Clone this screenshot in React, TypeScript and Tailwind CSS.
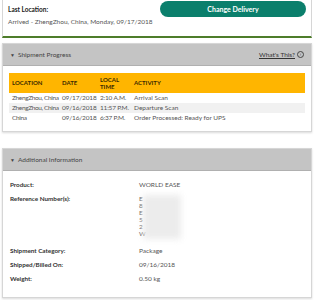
import { Fragment } from 'react';

const rows = [
  { loc: 'ZhengZhou, China', date: '09/17/2018', time: '2:10 A.M.', act: 'Arrival Scan' },
  { loc: 'ZhengZhou, China', date: '09/16/2018', time: '11:57 P.M.', act: 'Departure Scan' },
  { loc: 'China', date: '09/16/2018', time: '6:37 P.M.', act: 'Order Processed: Ready for UPS' },
];

const refs = ['E', '8', 'E', '5', '2', 'W'];

const PanelHeader = ({ title, help }: { title: string; help?: boolean }) => (
  <div className="flex items-center justify-between h-[22px] bg-[#c4c4c4] px-[7px] border-b border-[#b0b0b0]">
    <div className="flex items-center gap-[3px] text-[#444]">
      <span className="text-[5px]">▼</span>
      <span>{title}</span>
    </div>
    {help && (
      <div className="flex items-center gap-[2px] text-[#333]">
        <span className="underline">What's This?</span>
        <span className="inline-flex items-center justify-center w-[7px] h-[7px] rounded-full border border-[#444] text-[5px] leading-none">›</span>
      </div>
    )}
  </div>
);

const App = () => {
  return (
    <div className="w-[314px] h-[300px] bg-white overflow-hidden text-[6.5px] leading-[8px] text-[#555]" style={{ fontFamily: 'Lato, "Open Sans", sans-serif' }}>
      <div className="mx-[2px] border-x border-[#d6d6d6] border-b-2 border-b-[#4e7d2a] h-[38px] flex justify-between px-[5px]">
        <div className="pt-[6px]">
          <div className="font-bold text-[#222]">Last Location:</div>
          <div className="mt-[4px]">Arrived - ZhengZhou, China, Monday, 09/17/2018</div>
        </div>
        <button className="mt-[1px] w-[146px] h-[16px] rounded-full bg-[#0b7f6c] text-white font-bold text-[7px]">
          Change Delivery
        </button>
      </div>

      <div className="mx-[2px] mt-[5px] border border-[#d6d6d6] shadow-[0_1px_2px_rgba(0,0,0,0.15)]">
        <PanelHeader title="Shipment Progress" help />
        <div className="px-[6px] pt-[7px] pb-[8px]">
          <div className="grid grid-cols-[53px_38px_34px_1fr] whitespace-nowrap">
            <div className="bg-[#ffb500] h-[20px] flex items-center pl-[3px] font-bold text-[6px] text-[#3a2a00]">LOCATION</div>
            <div className="bg-[#ffb500] h-[20px] flex items-center font-bold text-[6px] text-[#3a2a00]">DATE</div>
            <div className="bg-[#ffb500] h-[20px] flex items-center font-bold text-[6px] text-[#3a2a00] leading-[7px]">LOCAL<br />TIME</div>
            <div className="bg-[#ffb500] h-[20px] flex items-center font-bold text-[6px] text-[#3a2a00]">ACTIVITY</div>
            {rows.map((r, i) => (
              <Fragment key={i}>
                <div className={`h-[10px] flex items-center pl-[3px] tracking-[-0.35px] ${i === 1 ? 'bg-[#f1f1f1]' : ''}`}>{r.loc}</div>
                <div className={`h-[10px] flex items-center tracking-[-0.15px] ${i === 1 ? 'bg-[#f1f1f1]' : ''}`}>{r.date}</div>
                <div className={`h-[10px] flex items-center tracking-[-0.2px] ${i === 1 ? 'bg-[#f1f1f1]' : ''}`}>{r.time}</div>
                <div className={`h-[10px] flex items-center ${i === 1 ? 'bg-[#f1f1f1]' : ''}`}>{r.act}</div>
              </Fragment>
            ))}
          </div>
        </div>
      </div>

      <div className="mx-[2px] mt-[16px] border border-[#d6d6d6] shadow-[0_1px_2px_rgba(0,0,0,0.15)]">
        <PanelHeader title="Additional Information" />
        <div className="grid grid-cols-[129px_1fr] px-[7px] pt-[10px] pb-[14px] gap-y-[6px]">
          <div className="font-bold text-[6.3px] text-[#333]">Product:</div>
          <div>WORLD EASE</div>
          <div className="font-bold text-[6.3px] text-[#333]">Reference Number(s):</div>
          <div className="relative leading-[7px] mb-[4px]">
            {refs.map((c, i) => (
              <div key={i}>{c}</div>
            ))}
            <div className="absolute left-[4px] top-0 w-[38px] h-[44px] bg-[#ececec] blur-[3px]" />
          </div>
          <div className="font-bold text-[6.3px] text-[#333]">Shipment Category:</div>
          <div>Package</div>
          <div className="font-bold text-[6.3px] text-[#333]">Shipped/Billed On:</div>
          <div>09/16/2018</div>
          <div className="font-bold text-[6.3px] text-[#333]">Weight:</div>
          <div>0.50 kg</div>
        </div>
      </div>
    </div>
  );
};

export default App;
